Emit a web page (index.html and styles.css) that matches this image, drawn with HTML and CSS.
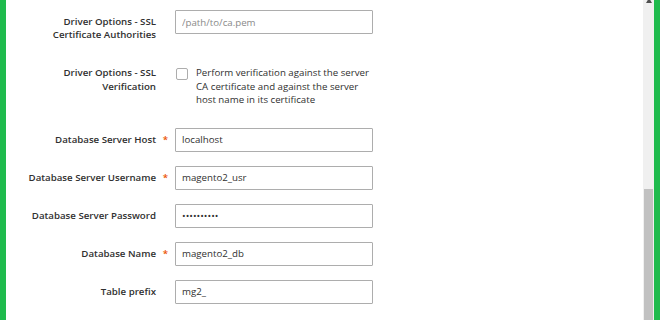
FILE: index.html
```html
<!DOCTYPE html>
<html>
  <head>
    <meta charset="utf-8">
    <title>Database settings</title>
    <link rel="stylesheet" href="styles.css">
  </head>
  <body>
    <div class="frame">
      <div class="edge"></div>
      <main class="form">
        <div class="field field-first">
          <label class="label">Driver Options - SSL Certificate Authorities</label>
          <span class="req"></span>
          <input class="input" type="text" placeholder="/path/to/ca.pem">
        </div>
        <div class="field field-check">
          <label class="label">Driver Options - SSL Verification</label>
          <span class="req"></span>
          <div class="check">
            <span class="box"></span>
            <span class="check-text">Perform verification against the server CA certificate and against the server host name in its certificate</span>
          </div>
        </div>
        <div class="field">
          <label class="label">Database Server Host</label>
          <span class="req">*</span>
          <input class="input" type="text" value="localhost">
        </div>
        <div class="field">
          <label class="label">Database Server Username</label>
          <span class="req">*</span>
          <input class="input" type="text" value="magento2_usr">
        </div>
        <div class="field">
          <label class="label">Database Server Password</label>
          <span class="req"></span>
          <input class="input" type="password" value="magento2pw">
        </div>
        <div class="field">
          <label class="label">Database Name</label>
          <span class="req">*</span>
          <input class="input" type="text" value="magento2_db">
        </div>
        <div class="field">
          <label class="label">Table prefix</label>
          <span class="req"></span>
          <input class="input" type="text" value="mg2_">
        </div>
      </main>
      <div class="scrollbar">
        <span class="arrow"></span>
        <span class="thumb"></span>
      </div>
      <div class="edge"></div>
    </div>
  </body>
</html>
```

FILE: styles.css
```css
body, html {
    padding: 0;
    margin: 0;
    height: 100%;
    overflow: hidden;
    font-family: 'Open Sans', sans-serif;
    font-size: 9.7px;
    color: #303030;
    background: #fff;
}

.frame {
    display: flex;
    height: 320px;
}

.edge {
    width: 6px;
    background: #1fbb4d;
    flex: none;
}

.form {
    flex: 1;
    padding-top: 10px;
}

.field {
    display: grid;
    grid-template-columns: 150px 19px 198px;
    align-items: start;
    margin-bottom: 14px;
}

.field-first {
    margin-bottom: 25px;
}

.field-check {
    margin-bottom: 21px;
}

.label {
    text-align: right;
    font-weight: 600;
    line-height: 12.5px;
    padding-top: 6px;
    padding-left: 20px;
}

.field-check .label {
    padding-top: 0;
    line-height: 13.5px;
}

.req {
    color: #eb5202;
    font-weight: 600;
    text-align: center;
    padding-top: 6px;
    line-height: 12.5px;
}

.input {
    box-sizing: border-box;
    width: 198px;
    height: 24px;
    margin: 0;
    padding: 0 6px;
    border: 1px solid #adadad;
    border-radius: 1px;
    font-family: 'Open Sans', sans-serif;
    font-size: 9.7px;
    color: #303030;
    outline: none;
}

.input::placeholder {
    color: #8a8a8a;
}

.check {
    display: flex;
    gap: 8px;
}

.box {
    flex: none;
    width: 10px;
    height: 10px;
    margin-top: 2px;
    margin-left: 1px;
    border: 1px solid #adadad;
    border-radius: 2px;
    background: #fff;
}

.check-text {
    line-height: 13.5px;
    width: 180px;
}

.scrollbar {
    width: 11px;
    flex: none;
    background: #f0f0f0;
    display: flex;
    flex-direction: column;
    align-items: center;
    overflow: hidden;
}

.arrow {
    flex: none;
    width: 0;
    height: 0;
    margin-top: -2px;
    border-left: 3.5px solid transparent;
    border-right: 3.5px solid transparent;
    border-bottom: 5px solid #505050;
}

.thumb {
    flex: 1;
    width: 9px;
    margin-top: 186px;
    background: #c1c1c1;
}
```
